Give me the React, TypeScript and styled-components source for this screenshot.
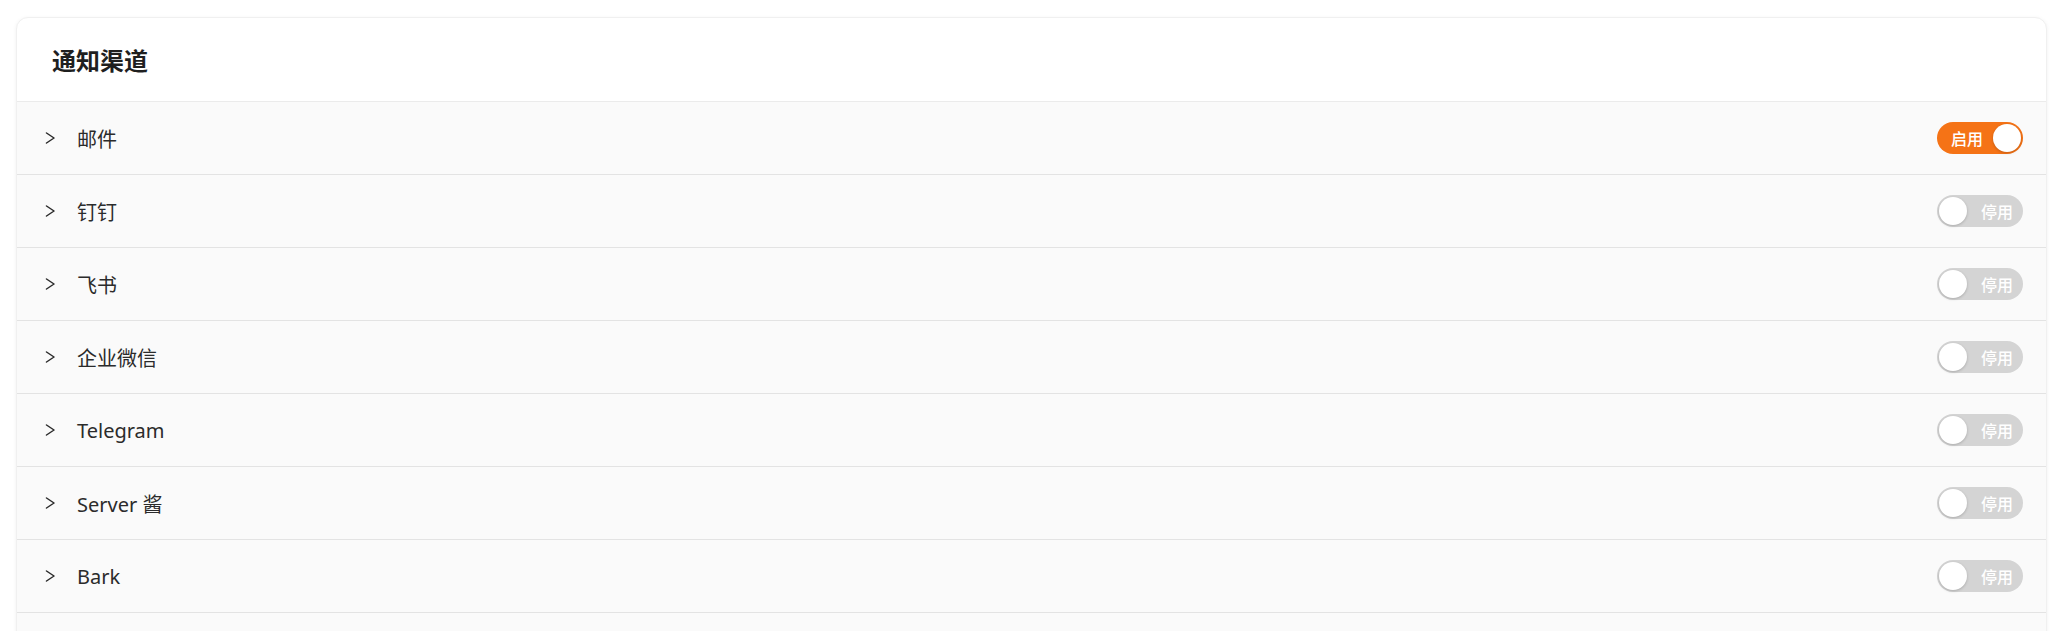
import React, { useState } from 'react';
import styled, { createGlobalStyle } from 'styled-components';

const GlobalStyle = createGlobalStyle`
  html, body {
    margin: 0;
    padding: 0;
    background: #ffffff;
    font-family: "Noto Sans", "Noto Sans CJK SC", sans-serif;
    color: #262626;
  }
`;

const Card = styled.div`
  margin: 17px 18px 0 16px;
  background: #ffffff;
  border: 1px solid #f0f0f0;
  border-radius: 12px;
  box-shadow: 0 1px 4px rgba(0, 0, 0, 0.06);
  overflow: hidden;
`;

const CardHeader = styled.div`
  height: 83px;
  display: flex;
  align-items: center;
  padding: 0 35px;
  border-bottom: 1px solid #ebebeb;
`;

const Title = styled.h2`
  margin: 0;
  font-size: 24px;
  font-weight: 700;
  color: #1f1f1f;
  font-family: "Noto Sans CJK SC", sans-serif;
`;

const Row = styled.div`
  height: 72px;
  display: flex;
  align-items: center;
  padding: 0 23px 0 27px;
  background: #fafafa;
  border-bottom: 1px solid #e3e3e3;
`;

const Chevron = styled.span`
  width: 12px;
  height: 12px;
  display: flex;
  align-items: center;
  justify-content: center;
  color: #2b2b2b;
  margin-right: 21px;
`;

const Label = styled.span`
  flex: 1;
  font-size: 20px;
  color: #2b2b2b;
`;

const Switch = styled.button<{ $on: boolean }>`
  position: relative;
  width: 86px;
  height: 32px;
  border: none;
  border-radius: 16px;
  cursor: pointer;
  background: ${p => (p.$on ? '#f57316' : '#d4d4d4')};
  display: flex;
  align-items: center;
  justify-content: ${p => (p.$on ? 'flex-start' : 'flex-end')};
  padding: ${p => (p.$on ? '0 0 0 14px' : '0 10px 0 0')};
  box-sizing: border-box;
  font-family: "Noto Sans CJK SC", sans-serif;
  font-size: 16px;
  font-weight: 500;
  color: #ffffff;
`;

const Knob = styled.span<{ $on: boolean }>`
  position: absolute;
  top: 2px;
  left: ${p => (p.$on ? '56px' : '2px')};
  width: 28px;
  height: 28px;
  border-radius: 50%;
  background: #ffffff;
  box-shadow: 0 1px 3px rgba(0, 0, 0, 0.2);
`;

const Tail = styled.div`
  height: 48px;
  background: #fafafa;
`;

const channels = [
  { name: '邮件', on: true },
  { name: '钉钉', on: false },
  { name: '飞书', on: false },
  { name: '企业微信', on: false },
  { name: 'Telegram', on: false },
  { name: 'Server 酱', on: false },
  { name: 'Bark', on: false },
];

export default function App() {
  const [state, setState] = useState(channels.map(c => c.on));

  return (
    <>
      <GlobalStyle />
      <Card>
        <CardHeader>
          <Title>通知渠道</Title>
        </CardHeader>
        {channels.map((c, i) => (
          <Row key={c.name}>
            <Chevron>
              <svg width="12" height="12" viewBox="0 0 12 12" fill="none">
                <path d="M2.5 1 L10 6 L2.5 11" stroke="currentColor" strokeWidth="1.5" strokeLinecap="round" strokeLinejoin="round" />
              </svg>
            </Chevron>
            <Label>{c.name}</Label>
            <Switch
              $on={state[i]}
              onClick={() => setState(s => s.map((v, j) => (j === i ? !v : v)))}
            >
              {state[i] ? '启用' : '停用'}
              <Knob $on={state[i]} />
            </Switch>
          </Row>
        ))}
        <Tail />
      </Card>
    </>
  );
}
